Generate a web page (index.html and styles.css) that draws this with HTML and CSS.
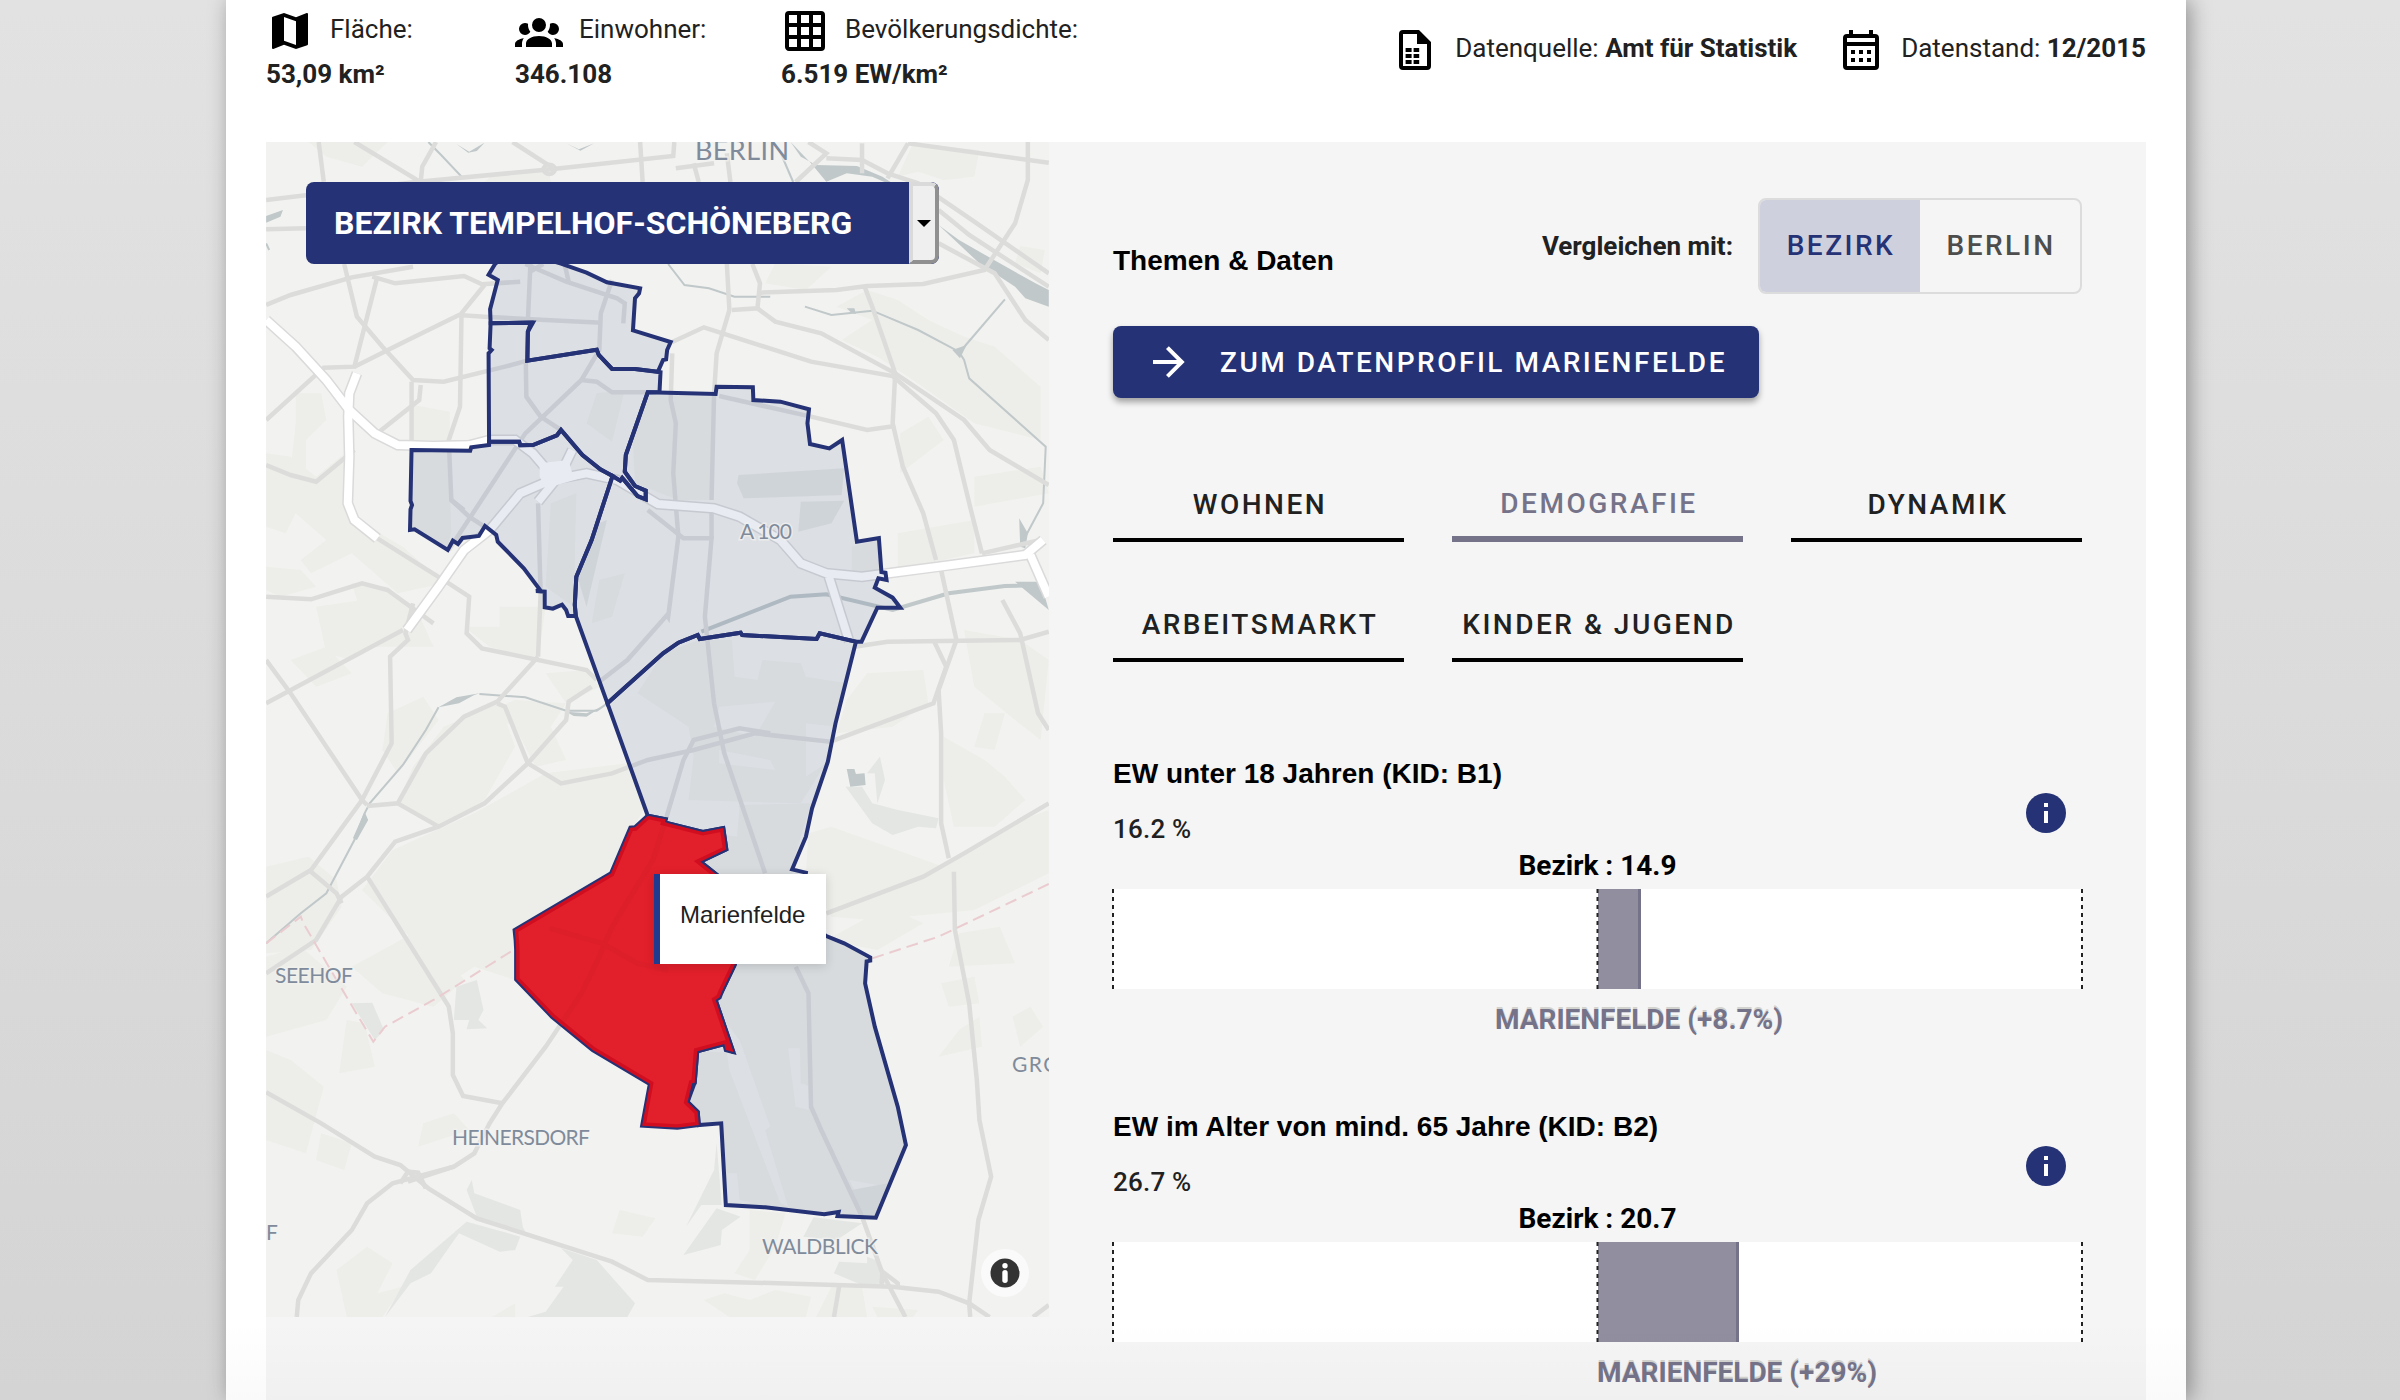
FILE: index.html
```html
<!DOCTYPE html>
<html lang="de">
<head>
<meta charset="utf-8">
<title>Bezirk Tempelhof-Schöneberg</title>
<link rel="stylesheet" href="styles.css">
</head>
<body>
<main class="card">
  <header class="facts">
    <div class="fact">
      <div class="fact-label"><svg class="icon" viewBox="0 0 24 24"><path d="M15,19L9,16.89V5L15,7.11M20.5,3C20.44,3 20.39,3 20.34,3L15,5.1L9,3L3.36,4.9C3.15,4.97 3,5.15 3,5.38V20.5A0.5,0.5 0 0,0 3.5,21C3.55,21 3.61,21 3.66,20.97L9,18.9L15,21L20.64,19.1C20.85,19 21,18.86 21,18.62V3.5A0.5,0.5 0 0,0 20.5,3Z"/></svg><span>Fläche:</span></div>
      <b>53,09 km²</b>
    </div>
    <div class="fact">
      <div class="fact-label"><svg class="icon" viewBox="0 0 24 24"><path d="M12,5.5A3.5,3.5 0 0,1 15.5,9A3.5,3.5 0 0,1 12,12.5A3.5,3.5 0 0,1 8.5,9A3.5,3.5 0 0,1 12,5.5M5,8C5.56,8 6.08,8.15 6.53,8.42C6.38,9.85 6.8,11.27 7.66,12.38C7.16,13.34 6.16,14 5,14A3,3 0 0,1 2,11A3,3 0 0,1 5,8M19,8A3,3 0 0,1 22,11A3,3 0 0,1 19,14C17.84,14 16.84,13.34 16.34,12.38C17.2,11.27 17.62,9.85 17.47,8.42C17.92,8.15 18.44,8 19,8M5.5,18.25C5.5,16.18 8.41,14.5 12,14.5C15.59,14.5 18.5,16.18 18.5,18.25V20H5.5V18.25M0,20V18.5C0,17.11 1.89,15.94 4.45,15.6C3.86,16.28 3.5,17.22 3.5,18.25V20H0M24,20H20.5V18.25C20.5,17.22 20.14,16.28 19.55,15.6C22.11,15.94 24,17.11 24,18.5V20Z"/></svg><span>Einwohner:</span></div>
      <b>346.108</b>
    </div>
    <div class="fact">
      <div class="fact-label"><svg class="icon" viewBox="0 0 24 24"><path d="M10,4V8H14V4H10M16,4V8H20V4H16M16,10V14H20V10H16M16,16V20H20V16H16M14,20V16H10V20H14M8,20V16H4V20H8M8,14V10H4V14H8M8,8V4H4V8H8M10,14H14V10H10V14M4,2H20A2,2 0 0,1 22,4V20A2,2 0 0,1 20,22H4C2.92,22 2,21.1 2,20V4A2,2 0 0,1 4,2Z"/></svg><span>Bevölkerungsdichte:</span></div>
      <b>6.519 EW/km²</b>
    </div>
    <div class="source">
      <svg class="icon" viewBox="0 0 24 24"><path fill-rule="evenodd" d="M6,2H14L20,8V20A2,2 0 0,1 18,22H6A2,2 0 0,1 4,20V4A2,2 0 0,1 6,2M6,4V20H18V9H13V4H6Z"/><path d="M7.3,11H10.3V13H7.3ZM11.3,11H14.1V13H11.3ZM7.3,14H10.3V16H7.3ZM11.3,14H14.1V16H11.3ZM7.3,17H10.3V19H7.3ZM11.3,17H14.1V19H11.3Z"/></svg>
      <span>Datenquelle: <b>Amt für Statistik</b></span>
      <svg class="icon icon-date" viewBox="0 0 24 24"><path fill-rule="evenodd" d="M6,2H8V4H16V2H18V4H19A2,2 0 0,1 21,6V20A2,2 0 0,1 19,22H5A2,2 0 0,1 3,20V6A2,2 0 0,1 5,4H6V2M5,6V8H19V6H5M5,10V20H19V10H5Z"/><path d="M7,12H9V14H7ZM11,12H13V14H11ZM15,12H17V14H15ZM7,16H9V18H7ZM11,16H13V18H11ZM15,16H17V18H15Z"/></svg>
      <span>Datenstand: <b>12/2015</b></span>
    </div>
  </header>

  <section class="panel">
    <div class="map">
      <svg class="map-layer" viewBox="11.76 6 1534.68 3525" preserveAspectRatio="none">
        <defs>
          <path id="marienfelde" d="M760,2027L795,2038 793,2047 868,2076 908,2064 914,2128 863,2165 900,2210 960,2300 930,2476 905,2556 901,2572 893,2580 928,2736 913,2730 910,2712 857,2734 852,2828 847,2830 838,2886 858,2916 860,2955 818,2963 749,2957 764,2832 652,2730 572,2630 502,2518 502,2428 501,2400 499,2370 688,2200 726,2063 735,2062Z"/>
          <clipPath id="marienfelde-clip"><use href="#marienfelde"/></clipPath>
        </defs>
        <g class="park">
          <path d="M95,6L250,6 200,80 130,50Z M1280,10L1410,30 1400,110 1340,120 1290,95 1250,110Z M1490,318L1538,330 1530,400 1480,370Z M460,100L565,90 570,126 440,126Z"/>
          <path d="M1190,450L1250,480 1310,540 1380,590 1440,620 1530,740 1530,900 1400,850 1280,720 1210,650 1140,600 1200,540 1130,500Z M1255,880L1310,830 1340,900 1255,1000Z M1400,1010L1530,980 1546,1060 1400,1100Z M1250,1180L1400,1140 1400,1240 1250,1290Z"/>
          <path d="M1010,370L1120,380 1070,450 990,430Z M1240,150L1300,140 1290,180 1240,180Z M300,795L372,815 372,900 300,900Z M70,760L120,760 130,840 90,900 90,1030 60,990 70,850Z"/>
          <path d="M12,940L60,950 110,1010 175,930 170,1100 190,1140 280,1220 360,1330 270,1360 180,1240 100,1300 80,1260 130,1200 70,1120 50,1180 12,1160Z M12,1280L80,1290 110,1340 40,1370 12,1350Z M180,1330L250,1340 310,1420 340,1520 220,1520 200,1430Z"/>
          <path d="M110,1400L200,1380 270,1480 180,1560 130,1540Z M60,1560L130,1520 180,1600 110,1640Z M250,1720L320,1670 350,1740 270,1900 240,1830Z M400,1460L470,1460 470,1400 560,1400 545,1560 450,1520Z"/>
          <path d="M440,1720L500,1680 600,1690 570,1760 600,1860 540,1880 500,1760Z M360,1760L470,1690 500,1820 440,1980 350,2060 270,1990 300,1880Z M560,1600L640,1590 665,1640 600,1690Z"/>
          <path d="M420,2020L560,1900 720,1870 755,2000 680,2200 500,2370 500,2520 420,2480 340,2560 300,2400 200,2250 260,2130Z M690,1970L745,1990 700,2150 650,2150Z"/>
          <path d="M12,2180L95,2150 150,2220 160,2300 100,2430 12,2440Z M12,2450L80,2420 170,2540 130,2640 12,2690Z M180,2480L300,2380 360,2440 400,2520 340,2600 240,2560Z"/>
          <path d="M1075,2080L1120,2060 1340,2180 1460,2060 1546,2010 1546,2200 1400,2310 1200,2340 1120,2330 1070,2200Z M1110,2400L1230,2300 1300,2350 1210,2430Z M1190,1600L1300,1590 1310,1690 1240,1760 1130,1780 1150,1680Z"/>
          <path d="M1340,1790L1420,1860 1460,1910 1500,1980 1440,2060 1360,2060 1340,1920Z M1380,1470L1490,1500 1546,1560 1530,1800 1480,1740 1400,1640Z M1420,1720L1460,1720 1440,1830 1400,1820Z"/>
          <path d="M1335,2530L1400,2510 1410,2590 1350,2600Z M1370,2670L1410,2630 1415,2720 1330,2750Z M1475,2630L1510,2600 1535,2660 1490,2720Z M1370,2380L1450,2360 1480,2470 1350,2480Z"/>
          <path d="M12,2730L60,2760 125,2840 90,3040 12,3000Z M120,2980L180,3010 165,3090 110,3060Z M170,2640L205,2650 225,2780 155,2800Z M320,2950L380,2920 410,2970 310,3020Z"/>
          <path d="M210,3320L260,3370 230,3460 280,3440 240,3531 170,3531 150,3390Z M705,3210L775,3235 750,3290 690,3280Z M960,3210L1030,3220 1010,3320 970,3420 930,3400 960,3330Z M870,3480L910,3460 960,3480 1010,3450 1080,3470 1070,3531 920,3531Z M1090,3531L1120,3440 1180,3440 1190,3531Z"/>
          <path d="M500,3490L500,3531 455,3531Z M1200,3500L1290,3510 1280,3531 1210,3531Z"/>
        </g>
        <g class="park">
          <path d="M300,932L370,932 375,1180 365,1230 297,1165Z M660,760L715,750 690,905 640,850Z M765,765L890,770 890,1080 820,1080 735,1030 730,880Z M570,1090L620,1060 615,1400 560,1340Z M1160,1220L1213,1200 1220,1290 1160,1300Z M665,1320L715,1300 690,1430 650,1450Z"/>
          <path d="M790,1540L860,1500 925,1500 930,1610 975,1620 985,1560 1060,1570 1070,1610 1150,1630 1113,1860 1060,1990 840,1980 850,1850 840,1760 740,1660Z"/>
          <path d="M940,1995L1080,1990 1040,2188 1070,2300 930,2300 863,2165 914,2128 908,2060Z M1110,2388L1196,2455 1186,2530 1266,3015 1207,3233 1035,3205 913,3195 904,2950 860,2955 838,2886 857,2734 928,2738 895,2580 935,2470Z"/>
        </g>
        <g class="clearing">
          <path d="M900,1700L1010,1685 970,1790 890,1760Z M900,1830L1000,1860 1010,1890 900,1870Z M1070,1750L1130,1760 1110,1870 1070,1910Z M840,1990L940,2000 935,2090 850,2070Z"/>
          <path d="M905,2630L940,2700 1000,2960 990,2970 1035,3200 1020,3190 920,2790Z M1035,2725L1058,2725 1060,2830 1080,2840 1075,2910 1050,2900Z M915,3100L935,3100 940,3180 970,3190 915,3190Z M1155,3120L1230,3140 1165,3150Z"/>
        </g>
        <g class="wood">
          <path d="M938,1005L1145,985 1140,1065 948,1075 935,1030Z M1060,1085L1145,1082 1120,1150 1055,1175Z M665,1150L680,1140 640,1400 620,1300Z"/>
          <path d="M1148,1940L1180,1940 1200,1990 1250,2010 1330,2035 1325,2065 1290,2060 1240,2085 1200,2050Z M1190,1900L1215,1850 1225,1920 1210,1990 1205,1900Z"/>
          <path d="M385,2540L425,2520 438,2610 428,2640 445,2665 405,2668 410,2640 380,2640Z M180,2590L220,2588 243,2670 225,2700Z"/>
          <path d="M415,3120L420,3160 510,3210 515,3260 525,3290 425,3230 405,3150Z M405,3245L510,3290 500,3330 470,3335 390,3280 335,3400 295,3430 245,3531 295,3390Z M590,3325L660,3360 735,3490 720,3531 525,3531 560,3515 595,3440 578,3440 613,3360Z"/>
          <path d="M895,3010L905,3195 865,3195 835,3260 890,3090Z M895,3205L942,3230 905,3270 903,3315 830,3345Z M1085,3232L1180,3250 1130,3300 1065,3290Z M1190,3350L1215,3365 1225,3430 1180,3435 1125,3400 1135,3365 1190,3370Z M1160,3150L1230,3130 1207,3233 1175,3225Z"/>
        </g>
        <g class="water">
          <path d="M1040,6L1060,50 1090,75 1170,78 1220,110 1260,150 1200,110 1150,100 1110,125 1080,70Z M1330,255L1370,300 1450,370 1520,430 1546,450 1546,500 1500,475 1480,440 1410,370Z"/>
          <path d="M385,12L410,35 440,8 425,33 408,38Z M600,10L625,28 655,10 628,32Z M12,228L45,210 40,230 12,248Z M1357,630L1385,615 1372,655Z M1150,505L1165,505 1168,522 1160,520Z M1150,1887L1165,1887 1168,1902 1185,1900 1187,1935 1157,1940Z M1488,1135L1505,1180 1500,1225 1490,1220Z M1480,1325L1530,1325 1546,1410Z"/>
          <path d="M350,1702L385,1672 430,1660 420,1665 390,1690Z M600,1715L640,1720 670,1700 640,1730 615,1728Z M205,2015L212,2040 190,2100 182,2095Z"/>
        </g>
        <g class="stream">
          <path d="M330,6L355,45 395,110"/><path d="M1018,30L1045,126"/><path d="M1068,500L1120,525 1200,512 1290,570 1370,635 1380,660 1390,715 1540,920 1535,1090 1500,1190"/><path d="M1375,630L1460,478"/><path d="M800,372L832,435 880,445 930,470 1000,470"/><path d="M12,310L18,330"/>
          <path d="M430,1662L520,1672 600,1712 660,1712 681,1690"/><path d="M350,1702L325,1770 280,1875 215,1990 205,2020 185,2100 130,2260 80,2320 12,2410"/>
          <path class="stream-wide" d="M865,1475L1040,1370 1110,1363 1240,1410 1350,1360 1460,1338 1530,1335"/>
        </g>
        <g class="road">
          <path d="M12,180L310,125 570,88 810,48 812,6"/><path d="M115,6L125,125"/><path d="M185,6L310,122"/><path d="M345,6L318,80 315,125"/><path d="M495,6L570,80"/><path d="M745,6L750,126"/><path d="M915,40L922,126"/><path d="M815,85L890,70"/><path d="M850,70L860,126"/><path d="M1075,6L1110,40 1050,126"/><path d="M1110,55L1180,60 1230,100 1290,130 1400,245 1546,400"/>
          <path d="M1180,10L1180,100"/><path d="M1270,10L1230,115"/><path d="M1270,10L1546,68"/><path d="M1505,6L1505,120 1480,250 1420,390 1300,432 1190,438 1130,450 980,458"/><path d="M1330,210L1390,285 1546,440"/><path d="M1330,310L1440,400 1500,540 1546,600"/><path d="M12,268L90,265"/>
          <path d="M12,495L60,465 180,412 300,380"/><path d="M165,372L190,530 240,620 300,720 360,725 480,680 524,662"/><path d="M230,410L205,560 185,680 125,683 12,840"/><path d="M220,410L265,430 400,408 435,433 510,425"/><path d="M185,680L290,600 390,525 440,530 560,540 670,548"/><path d="M440,435L395,520 392,800 370,900 375,1080 400,1110"/><path d="M297,725L297,900"/><path d="M315,735L312,780 230,880"/><path d="M185,930L110,1025 60,1005 12,975"/>
          <path d="M530,372L525,545"/><path d="M520,372L600,425 700,475 715,490 712,550"/><path d="M597,372L605,425"/><path d="M690,420L668,520 665,630 630,720 520,880 370,1230"/><path d="M521,665L522,770 550,830 590,870"/><path d="M630,720L660,725 690,757 760,757"/><path d="M555,372L530,395"/>
          <path d="M915,372L920,510 895,640 890,762 885,1080"/><path d="M965,372L980,430 975,505 925,510"/><path d="M975,505L1010,545 1100,580 1245,700 1380,840 1430,930 1546,1035"/><path d="M808,606L870,562 1080,665 1240,708 1325,820 1360,900 1395,1120 1415,1240"/><path d="M808,640L805,780 815,850 810,1000 820,1190 800,1430 798,1425 720,1560 665,1625"/><path d="M760,1110L830,1195 885,1195 872,1430 890,1690 910,1840 990,2200"/><path d="M885,1110L885,1195"/><path d="M900,768L1080,830 1190,870 1245,858"/><path d="M1185,440L1200,500 1245,700 1240,850 1260,980 1300,1120 1325,1260"/>
          <path d="M230,1195L370,1330 410,1370 405,1480 435,1525 640,1590 660,1620"/><path d="M12,1370L100,1378 200,1330 250,1350 340,1450"/><path d="M545,1090L550,1360 545,1550"/><path d="M375,1080L410,1130 440,1160"/><path d="M12,1690L280,1470"/><path d="M12,1560L60,1660 200,1980 210,1995"/><path d="M300,1390L285,1480 290,1500 255,1550 258,1810 200,1980 100,2190 12,2270"/><path d="M545,1550L465,1685 400,1730 325,1840 270,1990 210,1998"/><path d="M465,1690L480,1700 525,1870 590,1930 690,1900 760,1860 850,1830 970,1780 1118,1805 1320,1690 1345,1580 1320,1500"/><path d="M650,1640L605,1685 600,1740 525,1870 440,1990 350,2060 265,2105 210,2210 160,2270 110,2400 12,2500"/><path d="M270,1990L350,2060"/><path d="M100,2195L150,2260 160,2290"/><path d="M210,2210L370,2600 378,2680 378,2805 398,2868 475,2890"/>
          <path d="M795,2040L830,1860 850,1800 940,1765 1000,1780"/><path d="M1165,1520L1230,1505 1490,1500 1546,1475"/><path d="M1335,1290L1365,1500 1330,1650 1335,1780 1335,2050 1350,2155"/><path d="M1110,2320L1300,2210 1380,2140 1546,1990"/><path d="M1455,1380L1490,1480 1525,1720 1546,1770"/><path d="M1415,1240L1530,1200"/><path d="M1360,2195L1362,2370 1390,2590 1405,2820 1410,2940 1433,3110 1408,3240 1390,3490 1392,3531"/>
          <path d="M795,2040L770,2160 690,2360 665,2450 630,2560 560,2720 475,2890 450,2950 420,3040 380,3080 260,3130 210,3190 180,3270 100,3400 75,3480 72,3531"/><path d="M12,2857L120,2950 225,3050 275,3075 330,3145 425,3235 690,3365 760,3420 970,3428 1240,3440 1330,3455 1390,3490 1430,3531"/><path d="M275,3130L290,3095 310,3098 325,3145"/><path d="M290,3125L380,3080"/><path d="M1050,2480L1075,2560 1080,2900 1100,2970 1180,3230 1220,3400 1265,3531"/><path d="M1135,3440L1125,3531"/><path d="M1218,3440L1220,3395 1250,3430 1250,3440"/><path d="M1515,3531L1546,3495"/>
          <ellipse cx="567" cy="88" rx="11" ry="14"/>
        </g>
        <g class="highway-case">
          <path d="M12,540L70,620 130,720 175,810 225,880 270,915 340,918 410,916 450,900 500,900 535,940 560,985 590,1000"/><path d="M190,700L175,760 173,830 175,950 172,1090 185,1140 230,1195"/><path d="M288,1470L350,1340 400,1230 450,1170 510,1060 570,1020 640,1000 700,1020 780,1092 890,1105 940,1130 1020,1200 1060,1270 1110,1300 1180,1310 1330,1280 1500,1245 1535,1200"/><path d="M1510,1245L1546,1370"/><path d="M612,930L590,1000 545,1085"/><path d="M1115,1310L1155,1505"/>
        </g>
        <g class="highway">
          <path d="M12,540L70,620 130,720 175,810 225,880 270,915 340,918 410,916 450,900 500,900 535,940 560,985 590,1000"/><path d="M190,700L175,760 173,830 175,950 172,1090 185,1140 230,1195"/><path d="M288,1470L350,1340 400,1230 450,1170 510,1060 570,1020 640,1000 700,1020 780,1092 890,1105 940,1130 1020,1200 1060,1270 1110,1300 1180,1310 1330,1280 1500,1245 1535,1200"/><path d="M1510,1245L1546,1370"/><path d="M612,930L590,1000 545,1085"/><path d="M1115,1310L1155,1505"/>
          <path class="junction" d="M548,970L605,960 612,1000 650,1005 560,1045 548,1010Z"/>
        </g>
        <g class="border"><path d="M12,2410L80,2330 85,2350 150,2520 222,2705 245,2660 340,2580 502,2425"/><path d="M1200,2455L1330,2390 1546,2232"/></g>
        <g class="district">
          <path d="M461,371L448,404 466,420 451,508 452,550 535,548 525,575 524,662 660,629 664,645 690,687 735,687 780,695 790,660 796,658 798,630 805,606 731,571 735,475 743,460 745,445 680,427 640,398 590,371 500,330Z"/>
          <path d="M452,550L450,625 454,630 448,640 449,905 508,905 510,916 535,915 582,886 590,870 632,945 667,988 691,1008 706,1022 710,1014 740,1068 756,1078 756,1052 735,1038 715,995 717,945 760,757 783,756 785,697 735,687 690,687 664,645 660,629 524,662 525,575 531,548Z"/>
          <path d="M297,930L412,932 414,922 449,915 449,905 508,905 510,916 535,915 582,886 590,870 632,945 667,988 691,1008 650,1200 620,1310 617,1395 619,1428 604,1428 600,1410 592,1394 574,1406 558,1402 558,1355 541,1353 549,1350 517,1285 466,1205 463,1185 441,1158 429,1188 397,1194 388,1212 378,1202 368,1230 303,1168 294,1170 295,1108 298,1095 295,1083Z"/>
          <path d="M760,757L893,762 895,740 966,742 967,780 1020,785 1076,808 1073,850 1078,912 1116,925 1141,900 1170,1205 1213,1194 1218,1296 1226,1298 1228,1320 1212,1315 1205,1343 1240,1373 1255,1403 1210,1403 1179,1505 1168,1505 1097,1480 1091,1497 945,1485 942,1478 862,1497 858,1485 820,1508 790,1540 706,1655 681,1690 619,1428 617,1395 620,1310 650,1200 691,1008 706,1022 710,1014 740,1068 756,1078 756,1052 735,1038 715,995 717,945Z"/>
          <path d="M681,1690L706,1655 790,1540 820,1508 858,1485 862,1497 942,1478 945,1485 1091,1497 1097,1480 1168,1505 1128,1750 1113,1865 1082,2005 1070,2090 1043,2188 1070,2198 1060,2300 940,2300 900,2210 863,2165 914,2128 908,2064 868,2076 793,2047 795,2038 760,2027Z"/>
          <path d="M1060,2330L1110,2388 1145,2410 1196,2452 1196,2462 1189,2464 1186,2530 1205,2660 1250,2900 1266,3015 1207,3233 1132,3228 1134,3216 1106,3223 990,3202 913,3195 904,2950 860,2955 858,2916 838,2886 852,2828 857,2734 910,2712 928,2738 893,2580 905,2556 930,2476 960,2330Z"/>
        </g>
        <use href="#marienfelde" class="selected"/>
        <g clip-path="url(#marienfelde-clip)">
          <g class="selected-road"><path d="M795,2040L770,2160 690,2360 665,2450 630,2560 560,2720"/><path d="M568,2365L670,2410 740,2470 800,2490"/></g>
          <use href="#marienfelde" class="selected-edge"/>
        </g>
      </svg>
      <svg class="map-labels" viewBox="0 0 783 1175">
        <text x="429" y="17.5" font-size="27" textLength="94">BERLIN</text>
        <text x="474" y="397" font-size="21" textLength="52">A 100</text>
        <text x="9" y="840.5" font-size="21" textLength="78">SEEHOF</text>
        <text x="746" y="929.5" font-size="21" textLength="48">GRO</text>
        <text x="186" y="1003" font-size="21" textLength="138">HEINERSDORF</text>
        <text x="0" y="1098" font-size="21">F</text>
        <text x="496" y="1112" font-size="21" textLength="116">WALDBLICK</text>
      </svg>
      <div class="select"><span class="select-value">BEZIRK TEMPELHOF-SCHÖNEBERG</span><span class="select-arrow"></span></div>
      <div class="tooltip">Marienfelde</div>
      <svg class="map-info" viewBox="0 0 48 48"><circle class="halo" cx="24" cy="24" r="24"/><circle class="disc" cx="24" cy="24" r="14.5"/><circle class="mark" cx="24" cy="16.7" r="2.7"/><rect class="mark" x="21.3" y="21" width="5.4" height="13" rx="2.7"/></svg>
    </div>

    <div class="content">
      <div class="topline">
        <h2>Themen &amp; Daten</h2>
        <div class="compare"><b>Vergleichen mit:</b><div class="toggle"><span class="on">BEZIRK</span><span>BERLIN</span></div></div>
      </div>
      <a class="button"><svg viewBox="0 0 24 24"><path d="M4,11V13H16L10.5,18.5L11.92,19.92L19.84,12L11.92,4.08L10.5,5.5L16,11H4Z"/></svg><span>ZUM DATENPROFIL MARIENFELDE</span></a>
      <nav class="tabs">
        <a>WOHNEN</a><a class="active">DEMOGRAFIE</a><a>DYNAMIK</a><a>ARBEITSMARKT</a><a>KINDER &amp; JUGEND</a>
      </nav>

      <article class="chart">
        <div class="chart-head">
          <div><h3>EW unter 18 Jahren (KID: B1)</h3><p>16.2 %</p></div>
          <svg class="info" viewBox="0 0 20 20"><circle cx="10" cy="10" r="10"/><path d="M9,5H11V7H9ZM9,9H11V15H9Z"/></svg>
        </div>
        <div class="reference">Bezirk : 14.9</div>
        <svg class="bar" viewBox="0 0 969 100"><rect class="track" width="969" height="100"/><rect class="value" x="485" width="43" height="100"/><path class="value-end" d="M526.5,0V100"/><path class="tick" d="M0,0V100M484.5,0V100M969,0V100"/></svg>
        <div class="name-row"><span class="name" style="left:526px">MARIENFELDE (+8.7%)</span></div>
      </article>
      <article class="chart">
        <div class="chart-head">
          <div><h3>EW im Alter von mind. 65 Jahre (KID: B2)</h3><p>26.7 %</p></div>
          <svg class="info" viewBox="0 0 20 20"><circle cx="10" cy="10" r="10"/><path d="M9,5H11V7H9ZM9,9H11V15H9Z"/></svg>
        </div>
        <div class="reference">Bezirk : 20.7</div>
        <svg class="bar" viewBox="0 0 969 100"><rect class="track" width="969" height="100"/><rect class="value" x="485" width="141" height="100"/><path class="value-end" d="M624.5,0V100"/><path class="tick" d="M0,0V100M484.5,0V100M969,0V100"/></svg>
        <div class="name-row"><span class="name" style="left:624px">MARIENFELDE (+29%)</span></div>
      </article>
    </div>
  </section>
</main>
</body>
</html>
```
FILE: styles.css
```css
* { box-sizing: border-box; }
body {
  margin: 0;
  height: 1400px;
  overflow: hidden;
  background: linear-gradient(#e2e2e2, #d4d4d4);
  font-family: Roboto, sans-serif;
  font-size: 26px;
  color: #212121;
}
h2, h3, p { margin: 0; }
b { font-weight: 700; }
.card {
  position: relative;
  width: 1960px;
  height: 1400px;
  margin-left: 226px;
  padding: 0 40px;
  background: #fff;
  box-shadow: 4px 0 20px rgba(0, 0, 0, .36);
}
.card::after {
  content: "";
  position: absolute;
  left: 0;
  right: 0;
  bottom: 0;
  height: 80px;
  background: linear-gradient(transparent, rgba(0, 0, 0, .02));
}
.facts {
  display: grid;
  grid-template-columns: 249px 266px 380px 1fr;
  height: 142px;
  padding-top: 7px;
}
.fact { line-height: 44px; white-space: nowrap; }
.fact-label { display: flex; gap: 16px; height: 45px; }
.icon { width: 48px; height: 48px; flex: none; fill: #000; }
.source {
  display: flex;
  justify-content: flex-end;
  height: 48px;
  margin-top: 19px;
  line-height: 45px;
  white-space: nowrap;
}
.source .icon { margin-right: 16px; }
.source .icon-date { margin-left: 40px; }

.panel { display: flex; height: 1258px; background: #f5f5f5; }
.map {
  position: relative;
  width: 783px;
  height: 1175px;
  overflow: hidden;
  background: #f2f2f0;
}
.map-layer, .map-labels { position: absolute; inset: 0; width: 783px; height: 1175px; }
.map-layer path, .map-layer use, .map-layer ellipse {
  vector-effect: non-scaling-stroke;
  stroke-linejoin: miter;
}
.park { fill: #edeee9; }
.clearing { fill: #f2f2f0; }
.wood { fill: #e3e6e3; }
.water { fill: #c0c8ca; }
.stream, .road, .highway, .highway-case, .border { fill: none; }
.stream { stroke: #c0c8ca; stroke-width: 2px; }
.stream-wide { stroke-width: 4px; }
.road { stroke: #dcdcdb; stroke-width: 4.5px; }
.highway-case { stroke: #dadada; stroke-width: 11px; }
.highway { stroke: #fff; stroke-width: 8px; }
.highway .junction { fill: #fff; stroke: none; }
.border { stroke: #eaccd0; stroke-width: 2px; stroke-dasharray: 12 6; }
.district { fill: rgba(32, 62, 130, .1); stroke: #253275; stroke-width: 4px; }
.selected { fill: #e2202b; stroke: #253275; stroke-width: 4px; }
.selected-edge { fill: none; stroke: #d10e20; stroke-width: 7px; }
.selected-road { fill: none; stroke: #dd1f2a; stroke-width: 5px; }
.map-labels text {
  font-family: Lato, sans-serif;
  fill: #7f8b9b;
  stroke: #f2f2f0;
  stroke-width: 3px;
  stroke-opacity: .7;
  paint-order: stroke;
}
.select {
  position: absolute;
  left: 40px;
  top: 40px;
  display: flex;
  width: 633px;
  height: 82px;
  border-radius: 8px;
  overflow: hidden;
  background: #253275;
}
.select-value {
  width: 603px;
  padding-left: 28px;
  color: #fff;
  font-size: 32px;
  font-weight: 700;
  line-height: 82px;
  white-space: nowrap;
}
.select-arrow {
  display: flex;
  align-items: center;
  justify-content: center;
  width: 30px;
  background: #efefef;
  border: 4px solid;
  border-color: #dadada #909090 #909090 #dadada;
  border-radius: 0 8px 8px 0;
}
.select-arrow::after {
  content: "";
  border: 7px solid transparent;
  border-top-color: #000;
  border-bottom: 0;
}
.tooltip {
  position: absolute;
  left: 388px;
  top: 732px;
  width: 172px;
  height: 90px;
  padding-left: 20px;
  border-left: 6px solid #1f3a8f;
  background: #fff;
  box-shadow: 0 2px 10px rgba(0, 0, 0, .15);
  font: 24px/82px "Liberation Sans", sans-serif;
}
.map-info { position: absolute; left: 715px; top: 1107px; width: 48px; height: 48px; }
.map-info .halo { fill: #fafafa; }
.map-info .disc { fill: #333; }
.map-info .mark { fill: #fff; }

.content { width: 1097px; padding: 56px 64px 0; }
.topline { display: flex; justify-content: space-between; height: 96px; line-height: 96px; }
h2, h3 { font: 700 28px "Liberation Sans", sans-serif; color: #000; }
h2 { line-height: 96px; margin-top: 15px; }
.compare { display: flex; gap: 25px; }
.toggle {
  display: flex;
  width: 324px;
  height: 96px;
  border: 2px solid #dcdcdc;
  border-radius: 8px;
  overflow: hidden;
  font-size: 28px;
  font-weight: 500;
  line-height: 92px;
  letter-spacing: 2.5px;
  color: #4d4d4d;
}
.toggle span { flex: 1; padding-left: 2px; text-align: center; }
.toggle .on { background: #cfd0de; color: #253275; }
.button {
  display: flex;
  align-items: center;
  width: 646px;
  height: 72px;
  margin-top: 32px;
  padding-left: 32px;
  border-radius: 8px;
  background: #253275;
  box-shadow: 0 4px 6px rgba(0, 0, 0, .35);
  color: #fff;
  font-size: 28px;
  font-weight: 500;
  letter-spacing: 2.5px;
  white-space: nowrap;
}
.button svg { width: 48px; height: 48px; margin-right: 27px; fill: #fff; }
.tabs {
  display: grid;
  grid-template-columns: repeat(3, 291px);
  gap: 48px;
  margin-top: 72px;
}
.tabs a {
  height: 72px;
  padding-left: 3px;
  border-bottom: 4px solid #000;
  font-size: 28px;
  font-weight: 500;
  line-height: 69px;
  letter-spacing: 2.5px;
  text-align: center;
  white-space: nowrap;
}
.tabs .active { border-bottom: 6px solid #757389; color: #757389; line-height: 67px; }
.chart { padding-top: 67px; }
.tabs + .chart { padding-top: 91px; }
.chart-head { display: flex; justify-content: space-between; height: 96px; }
.chart h3 { padding-top: 1px; line-height: 40px; }
.chart p { margin-top: 15px; font-weight: 500; line-height: 41px; letter-spacing: .2px; }
.info { width: 40px; height: 40px; margin: 40px 16px 0 0; fill: #253275; }
.info path { fill: #fff; }
.reference { padding-top: 1px; height: 32px; font-size: 28px; font-weight: 700; line-height: 32px; color: #000; text-align: center; }
.bar { display: block; width: 969px; height: 100px; margin-top: 8px; overflow: visible; }
.track { fill: #fff; }
.value { fill: #908e9f; }
.value-end { stroke: #757389; stroke-width: 3px; }
.tick { stroke: #222; stroke-width: 2px; stroke-dasharray: 4 4; }
.name-row { position: relative; height: 50px; }
.name {
  position: absolute;
  top: 11px;
  transform: translateX(-50%);
  font-size: 28px;
  font-weight: 700;
  line-height: 40px;
  color: #757389;
  text-shadow: 0 -2px 0 #d2d2cf;
  white-space: nowrap;
}
```
